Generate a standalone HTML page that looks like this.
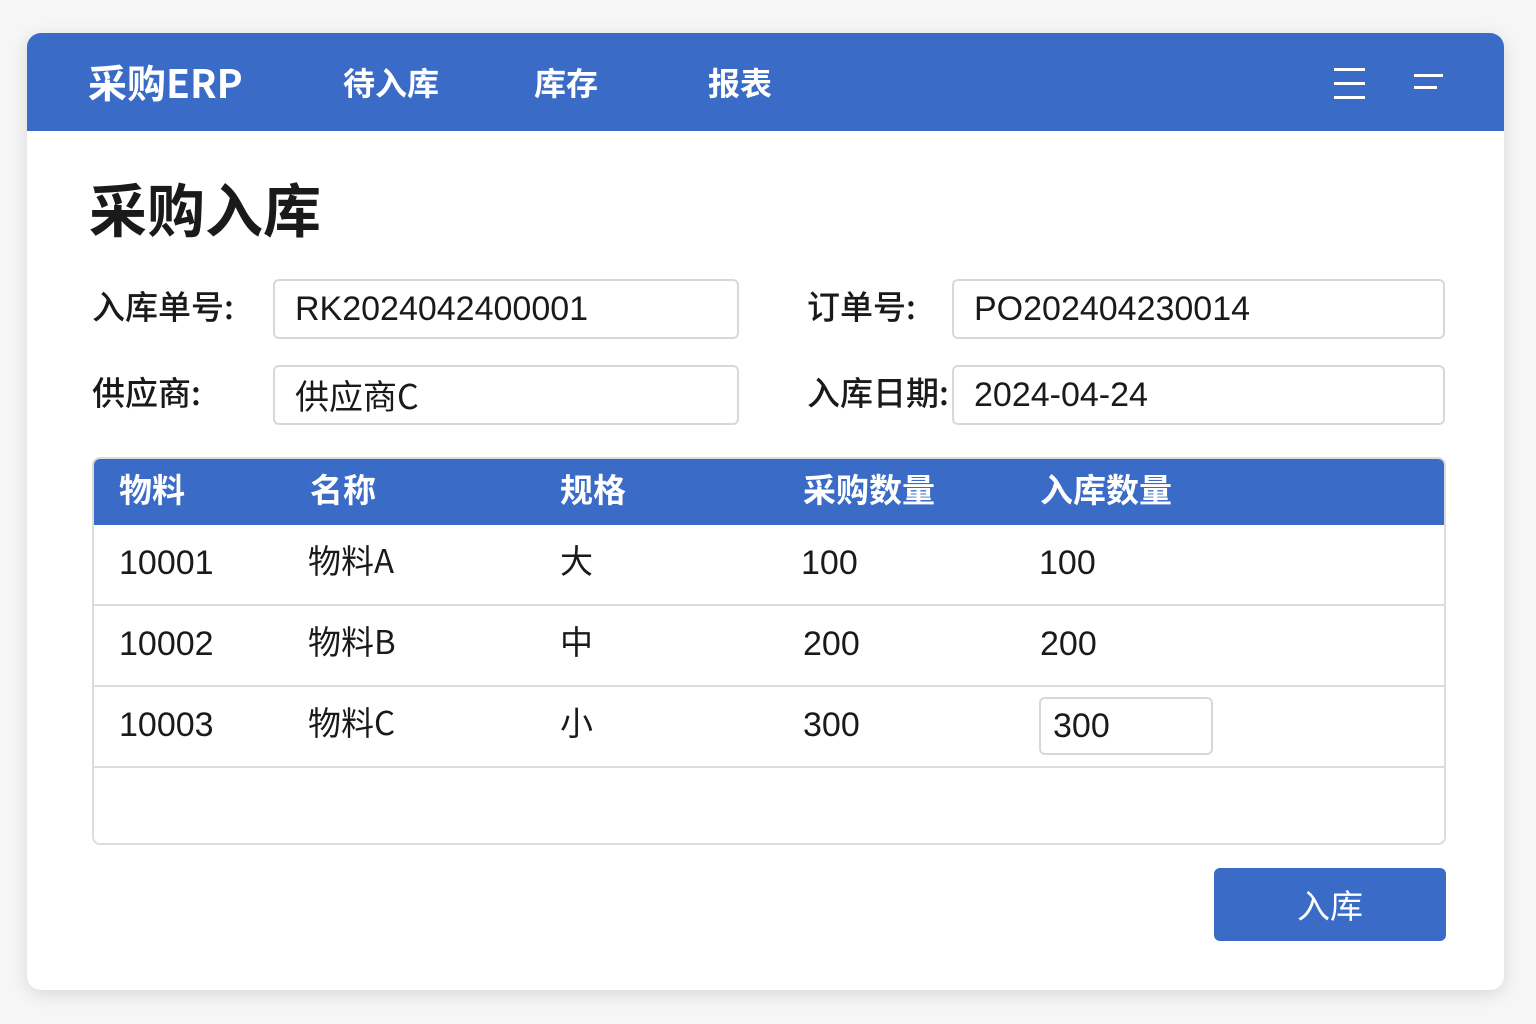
<!DOCTYPE html>
<html><head><meta charset="utf-8"><style>
*{margin:0;padding:0;box-sizing:border-box}
body{width:1536px;height:1024px;background:#f6f6f6;font-family:"Liberation Sans","Noto Sans CJK SC",sans-serif;position:relative;overflow:hidden;color:#1a1a1a}
.cj{font-family:"Noto Sans CJK SC","Liberation Sans",sans-serif}
.card{position:absolute;left:27px;top:33px;width:1477px;height:957px;background:#fff;border-radius:14px;box-shadow:0 4px 18px rgba(0,0,0,.12);overflow:hidden}
.hdr{position:absolute;left:0;top:0;width:100%;height:98px;background:#3a6bc6}
.a{position:absolute;white-space:nowrap;line-height:1.2}
.nav{color:#fff;font-size:32px;font-weight:bold;top:30px;font-family:"Noto Sans CJK SC",sans-serif;line-height:1.2}
.bar{position:absolute;background:#fff;height:3px}
.lbl{font-size:33px;font-weight:500;font-family:"Noto Sans CJK SC","Liberation Sans",sans-serif}
.inp{position:absolute;border:2px solid #d8d8d8;border-radius:6px;height:60px;font-size:34px;padding-left:20px;line-height:56px}
.tbl{position:absolute;left:65px;top:424px;width:1354px;height:388px;border:2px solid #dcdcdc;border-radius:8px;overflow:hidden}
.th{position:absolute;left:0;top:0;width:100%;height:66px;background:#3a6bc6}
.thc{color:#fff;font-size:33px;font-weight:bold;top:10px;font-family:"Noto Sans CJK SC",sans-serif}
.row{position:absolute;left:0;width:100%;height:81px;border-bottom:2px solid #dcdcdc}
.td{font-size:34px;top:18px}
.tc{font-size:33px;top:15px;font-family:"Noto Sans CJK SC","Liberation Sans",sans-serif}
</style></head><body>
<div class="card">
 <div class="hdr">
  <div class="a nav" style="left:61px;font-size:39px;top:26px">采购ERP</div>
  <div class="a nav" style="left:316px">待入库</div>
  <div class="a nav" style="left:507px">库存</div>
  <div class="a nav" style="left:681px">报表</div>
  <div class="bar" style="left:1307px;top:35px;width:31px"></div>
  <div class="bar" style="left:1307px;top:49px;width:31px"></div>
  <div class="bar" style="left:1307px;top:63px;width:31px"></div>
  <div class="bar" style="left:1387px;top:41px;width:29px"></div>
  <div class="bar" style="left:1387px;top:53px;width:23px"></div>
 </div>
 <div class="a cj" style="left:62px;top:140px;font-size:58px;font-weight:bold">采购入库</div>
 <div class="a lbl" style="left:65px;top:253px">入库单号:</div>
 <div class="inp" style="left:246px;top:246px;width:466px">RK2024042400001</div>
 <div class="a lbl" style="left:780px;top:253px">订单号:</div>
 <div class="inp" style="left:925px;top:246px;width:493px">PO202404230014</div>
 <div class="a lbl" style="left:65px;top:339px">供应商:</div>
 <div class="inp cj" style="left:246px;top:332px;width:466px">供应商C</div>
 <div class="a lbl" style="left:780px;top:339px">入库日期:</div>
 <div class="inp" style="left:925px;top:332px;width:493px">2024-04-24</div>
 <div class="tbl">
  <div class="th">
   <div class="a thc" style="left:25px">物料</div>
   <div class="a thc" style="left:216px">名称</div>
   <div class="a thc" style="left:466px">规格</div>
   <div class="a thc" style="left:709px">采购数量</div>
   <div class="a thc" style="left:946px">入库数量</div>
  </div>
  <div class="row" style="top:66px">
   <div class="a td" style="left:25px">10001</div><div class="a tc" style="left:214px">物料A</div><div class="a tc" style="left:466px">大</div><div class="a td" style="left:707px">100</div><div class="a td" style="left:945px">100</div>
  </div>
  <div class="row" style="top:147px">
   <div class="a td" style="left:25px">10002</div><div class="a tc" style="left:214px">物料B</div><div class="a tc" style="left:466px">中</div><div class="a td" style="left:709px">200</div><div class="a td" style="left:946px">200</div>
  </div>
  <div class="row" style="top:228px">
   <div class="a td" style="left:25px">10003</div><div class="a tc" style="left:214px">物料C</div><div class="a tc" style="left:466px">小</div><div class="a td" style="left:709px">300</div>
   <div class="inp" style="left:945px;top:10px;width:174px;height:58px;padding-left:12px;line-height:54px">300</div>
  </div>
 </div>
 <div class="a cj" style="left:1187px;top:835px;width:232px;height:73px;background:#3a6bc6;border-radius:6px;color:#fff;font-size:33px;text-align:center;line-height:73px">入库</div>
</div>
</body></html>
